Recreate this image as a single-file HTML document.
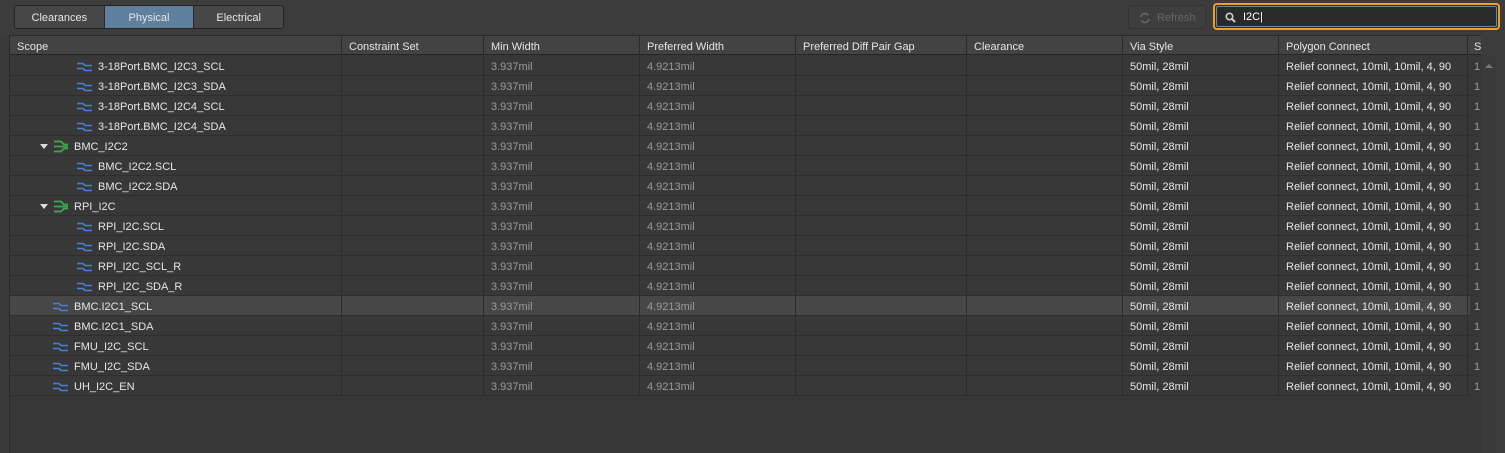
<!DOCTYPE html>
<html><head><style>
*{margin:0;padding:0;box-sizing:border-box}
body{width:1505px;height:453px;background:#3c3c3c;font-family:"Liberation Sans",sans-serif;font-size:11px;color:#e6e6e6;position:relative;overflow:hidden}
.tabs{position:absolute;left:14px;top:5px;width:270px;height:24px;border:1px solid #242424;border-radius:3px;display:flex;overflow:hidden;background:#474747}
.tabs div{flex:1;text-align:center;line-height:25px;border-right:1px solid #2a2a2a}
.tabs div:last-child{border:none}
.tabs .on{background:#5f7f9f}
.refresh{position:absolute;left:1128px;top:5px;width:78px;height:24px;border:1px solid #333;border-radius:3px;background:#3e3e3e;color:#666;line-height:25px;padding-left:28px}
.search{position:absolute;left:1213px;top:3px;width:287px;height:27px;border:2px solid #f0a020;border-radius:4px;background:#2a2a2a}
.search .in{position:absolute;left:1px;top:1px;right:1px;bottom:1px;border:1px solid #6a8aaa;border-radius:2px;padding-left:26px;line-height:21px;color:#fff}
.table{position:absolute;left:9px;top:35px;width:1472px;height:418px;background:#373737;border-left:1px solid #2a2a2a;border-top:1px solid #2a2a2a}
.hdr{position:absolute;left:0;top:0;height:19px;width:100%;background:#434343;border-bottom:1px solid #262626}
.hdr span{position:absolute;top:5px}
.row{position:absolute;left:0;width:1460px;height:20px;border-bottom:1px solid #2e2e2e;background:#383838}
.row.sel{background:#474747}
.row span{position:absolute;top:5px}
.g{color:#9a9a9a}
.vl{position:absolute;top:0;bottom:0;width:1px;background:#2c2c2c}
.sb{position:absolute;left:1481px;top:55px;width:16px;height:398px;background:#3a3a3a}
.gut{position:absolute;left:0;top:35px;width:9px;height:418px;background:#3a3a3a}
</style></head><body>
<div class="tabs"><div>Clearances</div><div class="on">Physical</div><div>Electrical</div></div>
<div class="refresh"><svg style="position:absolute;left:10px;top:6px" width="12" height="12" viewBox="0 0 12 12"><path d="M2 5a4 4 0 0 1 7-2M10 7a4 4 0 0 1-7 2" stroke="#666" stroke-width="1.6" fill="none"/><path d="M8 1l2 2-2 1zM4 11l-2-2 2-1z" fill="#666"/></svg>Refresh</div>
<div class="search"><div class="in"><svg style="position:absolute;left:8px;top:5px" width="11" height="11" viewBox="0 0 11 11"><circle cx="4.5" cy="4.5" r="3.2" stroke="#ccc" stroke-width="1.6" fill="none"/><path d="M7 7l3 3" stroke="#ccc" stroke-width="2"/></svg>I2C|</div></div>
<div class="gut"></div>
<div class="table" id="t">
<div class="hdr"><span style="left:7px">Scope</span><span style="left:339px">Constraint Set</span><span style="left:481px">Min Width</span><span style="left:637px">Preferred Width</span><span style="left:793px">Preferred Diff Pair Gap</span><span style="left:964px">Clearance</span><span style="left:1120px">Via Style</span><span style="left:1276px">Polygon Connect</span><span style="left:1464px">S</span></div>
</div>
<div class="sb"><svg style="position:absolute;left:4px;top:8px" width="8" height="5"><path d="M0 5L4 1 8 5z" fill="#777"/></svg></div>
<script>
var rows=[[3,"3-18Port.BMC_I2C3_SCL"],[3,"3-18Port.BMC_I2C3_SDA"],[3,"3-18Port.BMC_I2C4_SCL"],[3,"3-18Port.BMC_I2C4_SDA"],[1,"BMC_I2C2"],[2,"BMC_I2C2.SCL"],[2,"BMC_I2C2.SDA"],[1,"RPI_I2C"],[2,"RPI_I2C.SCL"],[2,"RPI_I2C.SDA"],[2,"RPI_I2C_SCL_R"],[2,"RPI_I2C_SDA_R"],[0,"BMC.I2C1_SCL"],[0,"BMC.I2C1_SDA"],[0,"FMU_I2C_SCL"],[0,"FMU_I2C_SDA"],[0,"UH_I2C_EN"]];
var net='<svg width="16" height="10" viewBox="0 0 16 10"><path d="M0 1.5h6l2 2h7M0 6.5h6l2 2h7" stroke="#4a7fd6" stroke-width="1.6" fill="none"/></svg>';
var bus='<svg width="16" height="13" viewBox="0 0 16 13"><path d="M1 1.5h7l3 3h4M1 6.5h14M1 11.5h7l3-3h4" stroke="#3aaa4a" stroke-width="1.7" fill="none"/></svg>';
var h='',cols=[331,473,629,785,956,1112,1268,1457];
rows.forEach(function(r,i){
 var y=20+i*20,t=r[0],ix,tx,ic;
 if(t>=2){ix=67;tx=88;ic=net}else if(t==1){ix=43;tx=64;ic=bus}else{ix=43;tx=64;ic=net}
 h+='<div class="row'+(i==12?' sel':'')+'" style="top:'+y+'px">';
 if(t==1)h+='<span style="left:30px;top:8px;width:0;height:0;border-left:4px solid transparent;border-right:4px solid transparent;border-top:5px solid #ddd"></span>';
 h+='<span style="left:'+ix+'px;top:'+(t==1?4:6)+'px">'+ic+'</span><span style="left:'+tx+'px">'+r[1]+'</span>';
 h+='<span class="g" style="left:481px">3.937mil</span><span class="g" style="left:637px">4.9213mil</span><span style="left:1120px">50mil, 28mil</span><span style="left:1276px">Relief connect, 10mil, 10mil, 4, 90</span><span class="g" style="left:1464px">1</span>';
 cols.forEach(function(c){h+='<div class="vl" style="left:'+c+'px"></div>'});
 h+='</div>';
});
var hv='';cols.forEach(function(c){hv+='<div class="vl" style="left:'+c+'px;height:19px;background:#2a2a2a"></div>'});
document.getElementById('t').insertAdjacentHTML('beforeend',h);
document.querySelector('.hdr').insertAdjacentHTML('beforeend',hv);
</script>
</body></html>
